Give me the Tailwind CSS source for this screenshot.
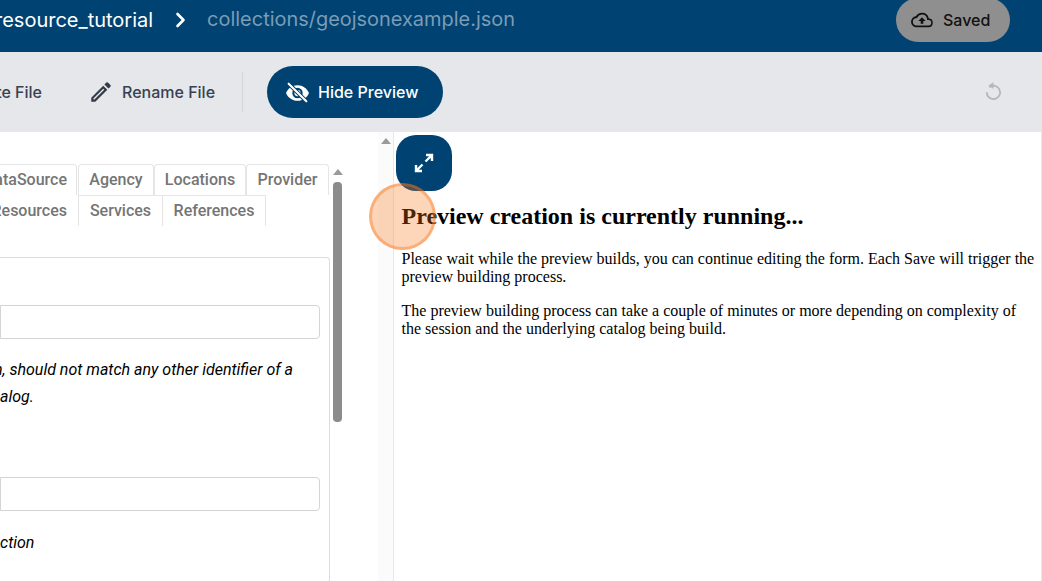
<!DOCTYPE html>
<html>
<head>
    <meta charset="UTF-8">
    <title>Preview</title>
    <script src="https://cdn.jsdelivr.net/npm/@tailwindcss/browser@4"></script>
</head>
<body class="relative w-[1042px] h-[581px] overflow-hidden bg-white font-['Inter',sans-serif]">

    <!-- top bar -->
    <header class="h-[52px] bg-[#004271] flex items-center pb-[12px]">
        <div class="flex-1 flex items-center min-w-0 -ml-[5px]">
            <span class="text-[20px] text-white font-normal">resource_tutorial</span>
            <svg class="ml-[21px] w-[14px] h-[16px]" viewBox="0 0 14 16" fill="none" stroke="white" stroke-width="2.6" stroke-linecap="round" stroke-linejoin="round"><path d="M3.5 2l6 6-6 6"/></svg>
            <span class="ml-[19px] text-[19.95px] text-[#7a9cb6]">collections/geojsonexample.json</span>
        </div>
        <div class="w-[114px] h-[44px] mr-[32px] rounded-[22px] bg-[#8f8f8f] flex items-center pl-[15px] shrink-0">
            <svg class="w-[22px] h-[22px]" viewBox="0 0 24 24" fill="#111"><path d="M19.35 10.04A7.49 7.49 0 0 0 12 4a7.5 7.5 0 0 0-6.65 4.04A6 6 0 0 0 6 20h13a5 5 0 0 0 .35-9.96zM19 18H6a4 4 0 0 1-.44-7.97l1.07-.11.5-.95A5.46 5.46 0 0 1 12 6a5.5 5.5 0 0 1 5.39 4.42l.3 1.5 1.53.11A2.98 2.98 0 0 1 19 18zM8 13h2.55v3h2.9v-3H16l-4-4z"/></svg>
            <span class="ml-[10px] text-[16px] font-medium text-[#111]">Saved</span>
        </div>
    </header>

    <!-- toolbar -->
    <div class="h-[80px] bg-[#e5e7eb] flex items-center overflow-hidden">
        <span class="-ml-[44px] w-[86px] text-[16px] font-medium text-[#374151] whitespace-nowrap text-right">Delete File</span>
        <svg class="ml-[46px] w-[26px] h-[26px]" viewBox="0 0 24 24" fill="#333b47"><path d="M3 17.25V21h3.75L17.81 9.94l-3.75-3.75L3 17.25zM5.92 19H5v-.92l9.06-9.06.92.92L5.92 19zM20.71 7.04a1 1 0 0 0 0-1.41l-2.34-2.34a1 1 0 0 0-1.41 0l-1.83 1.83 3.75 3.75 1.83-1.83z"/></svg>
        <span class="ml-[8px] text-[16px] font-medium text-[#374151] whitespace-nowrap">Rename File</span>
        <div class="ml-[27px] w-px h-[40px] bg-[#d1d5db]"></div>
        <button class="ml-[24px] w-[176px] h-[52px] rounded-[26px] bg-[#004271] flex items-center pl-[18px] text-white">
            <svg class="w-[25px] h-[25px]" viewBox="0 0 24 24" fill="white"><path d="M12 5C7 5 2.7 8.1 1 12.5 2.7 16.900 7 20 12 20s9.300-3.100 11-7.500C21.300 8.100 17 5 12 5zm0 12.500a5 5 0 1 1 0-10 5 5 0 0 1 0 10zm0-8a3 3 0 1 0 0 6 3 3 0 0 0 0-6z"/><path d="M3.500 3.500l17 17" stroke="#004271" stroke-width="4"/><path d="M3.500 3.500l17 17" stroke="white" stroke-width="2" stroke-linecap="round"/></svg>
            <span class="ml-[8px] text-[16px] font-medium whitespace-nowrap">Hide Preview</span>
        </button>
        <svg class="ml-auto mr-[39px] -mt-[3px] w-[20px] h-[20px]" viewBox="0 0 24 24" fill="none" stroke="#b5b7bb" stroke-width="2.200"><path d="M7.500 7.500A8 8 0 1 1 4.500 13.500"/><path d="M12.500 1.500v8l-6-4z" fill="#b5b7bb" stroke="none"/></svg>
    </div>

    <!-- panes -->
    <main class="h-[449px] flex overflow-hidden">
        <div class="w-[330px] shrink-0 overflow-hidden pt-[32px]">
            <div class="h-[31px] flex justify-end pr-[1px] text-[16px] font-medium text-[#757575] font-['Roboto',sans-serif] leading-[30px]">
                <span class="shrink-0 h-[31px] w-[110px] mr-[1px] border-t border-r border-[#e5e5e5] rounded-t text-right pr-[9px]">DataSource</span>
                <span class="shrink-0 h-[31px] w-[76px] border border-b-0 border-[#e5e5e5] rounded-t text-center">Agency</span>
                <span class="shrink-0 h-[31px] w-[92px] border border-b-0 border-[#e5e5e5] rounded-t text-center">Locations</span>
                <span class="shrink-0 h-[31px] w-[83px] border border-b-0 border-[#e5e5e5] rounded-t text-center">Provider</span>
            </div>
            <div class="h-[31px] flex text-[16px] font-medium text-[#757575] font-['Roboto',sans-serif] leading-[30px]">
                <span class="h-[31px] w-[79px] pt-px border-r border-[#e5e5e5] pr-[11px] whitespace-nowrap flex justify-end">Resources</span>
                <span class="h-[31px] w-[84px] border-t border-r border-[#e5e5e5] text-center">Services</span>
                <span class="h-[31px] w-[103px] border-t border-r border-[#e5e5e5] text-center">References</span>
            </div>
            <div class="mt-[31px] h-[400px] border-t border-r border-[#dcdcdc] rounded-tr pt-[47px] pr-[9px] font-['Roboto',sans-serif] text-black">
                <div class="h-[34px] border border-[#d4d4d4] rounded-r"></div>
                <div class="mt-[17px] flex justify-end pr-[27px] text-[16px] italic leading-[27px] whitespace-nowrap">n, should not match any other identifier of a</div>
                <div class="text-[16px] italic leading-[27px] whitespace-nowrap">alog.</div>
                <div class="mt-[67px] h-[34px] border border-[#d4d4d4] rounded-r"></div>
                <div class="mt-[18px] text-[16px] italic leading-[27px] whitespace-nowrap">ction</div>
            </div>
        </div>

        <!-- inner scrollbar -->
        <div class="w-[15px] shrink-0 pt-[37px] flex flex-col items-center">
            <div class="w-0 h-0 border-x-[5px] border-x-transparent border-b-[6px] border-b-[#9a9a9a]"></div>
            <div class="mt-[7px] w-[9px] h-[240px] rounded-[4px] bg-[#8c8c8c]"></div>
        </div>

        <!-- outer gutter -->
        <div class="w-[49px] shrink-0 flex justify-end">
            <div class="w-[16px] bg-[#fbfbfb] border-r border-[#e8e8e8] flex justify-center pt-[6px]">
                <div class="w-0 h-0 border-x-[5px] border-x-transparent border-b-[6px] border-b-[#9a9a9a]"></div>
            </div>
        </div>

        <!-- preview -->
        <div class="flex-1 min-w-0 border-r border-[#e8e8e8] pt-[3px] font-['Liberation_Serif',serif] text-black">
            <button class="ml-[2px] w-[56px] h-[56px] rounded-[20px] bg-[#004271] flex items-center justify-center">
                <svg class="w-[24px] h-[24px]" viewBox="0 0 24 24" fill="none" stroke="white" stroke-width="2.400"><path d="M13.500 10.500L19 5M14 4h6v6" /><path d="M10.500 13.500L5 19M4 14v6h6"/></svg>
            </button>
            <div class="pl-[7.5px] pr-[2px]">
                <h1 class="mt-[12px] text-[24px] leading-[27px] font-bold">Preview creation is currently running...</h1>
                <p class="mt-[20px] text-[16px] leading-[18px]">Please wait while the preview builds, you can continue editing the form. Each Save will trigger the preview building process.</p>
                <p class="mt-[16px] text-[16px] leading-[18px]">The preview building process can take a couple of minutes or more depending on complexity of the session and the underlying catalog being build.</p>
            </div>
        </div>
    </main>

    <!-- click marker -->
    <div class="absolute left-[369px] top-[183px] w-[67px] h-[67px] rounded-full bg-[#f97316]/30 border-[3px] border-[#f97316]/40"></div>
</body>
</html>
